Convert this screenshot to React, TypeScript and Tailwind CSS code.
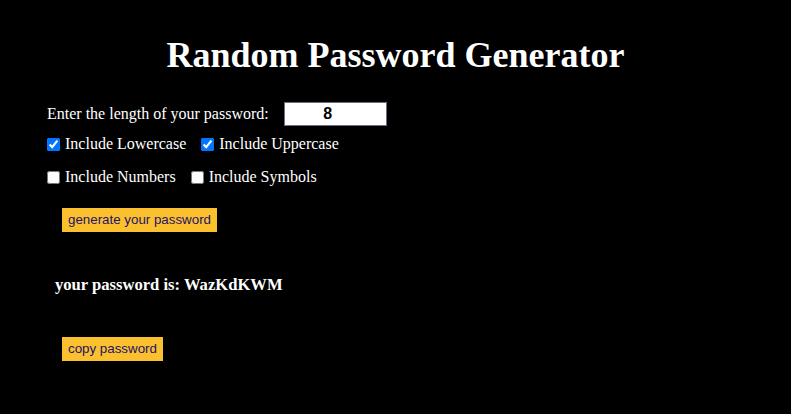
export default function App() {
  return (
    <div className="min-h-[414px] w-full bg-black text-white" style={{ fontFamily: '"Liberation Serif", "Times New Roman", serif' }}>
      <div className="pt-[35px]">
        <h1 className="text-center text-[36px] font-bold leading-[41px]">Random Password Generator</h1>
      </div>

      <div className="mt-[26px] pl-[47px] text-[16px]">
        <div className="flex items-center h-[24px]">
          <span>Enter the length of your password:</span>
          <input
            type="number"
            defaultValue={8}
            className="ml-[15px] h-[24px] w-[103px] border border-gray-500 bg-white text-center text-[16px] font-bold text-black outline-none"
            style={{ fontFamily: '"Liberation Sans", Arial, sans-serif' }}
          />
        </div>

        <div className="mt-[9px] flex items-center h-[18px]">
          <label className="flex items-center">
            <input type="checkbox" defaultChecked className="m-0 mr-[5px] h-[13px] w-[13px] accent-[#0075ff]" />
            Include Lowercase
          </label>
          <label className="ml-[15px] flex items-center">
            <input type="checkbox" defaultChecked className="m-0 mr-[5px] h-[13px] w-[13px] accent-[#0075ff]" />
            Include Uppercase
          </label>
        </div>

        <div className="mt-[15px] flex items-center h-[18px]">
          <label className="flex items-center">
            <input type="checkbox" className="m-0 mr-[5px] h-[13px] w-[13px]" />
            Include Numbers
          </label>
          <label className="ml-[15px] flex items-center">
            <input type="checkbox" className="m-0 mr-[5px] h-[13px] w-[13px]" />
            Include Symbols
          </label>
        </div>
      </div>

      <div className="pl-[62px] mt-[21px]">
        <button
          className="h-[24px] bg-[#fbc02d] px-[6px] text-[13.33px] text-[#24126b]"
          style={{ fontFamily: '"Liberation Sans", Arial, sans-serif' }}
        >
          generate your password
        </button>
      </div>

      <div className="pl-[55px] mt-[44px] text-[16.6px] font-bold leading-[18px]">your password is: WazKdKWM</div>

      <div className="pl-[62px] mt-[42px]">
        <button
          className="h-[24px] bg-[#fbc02d] px-[6px] text-[13.33px] text-[#24126b]"
          style={{ fontFamily: '"Liberation Sans", Arial, sans-serif' }}
        >
          copy password
        </button>
      </div>
    </div>
  )
}
